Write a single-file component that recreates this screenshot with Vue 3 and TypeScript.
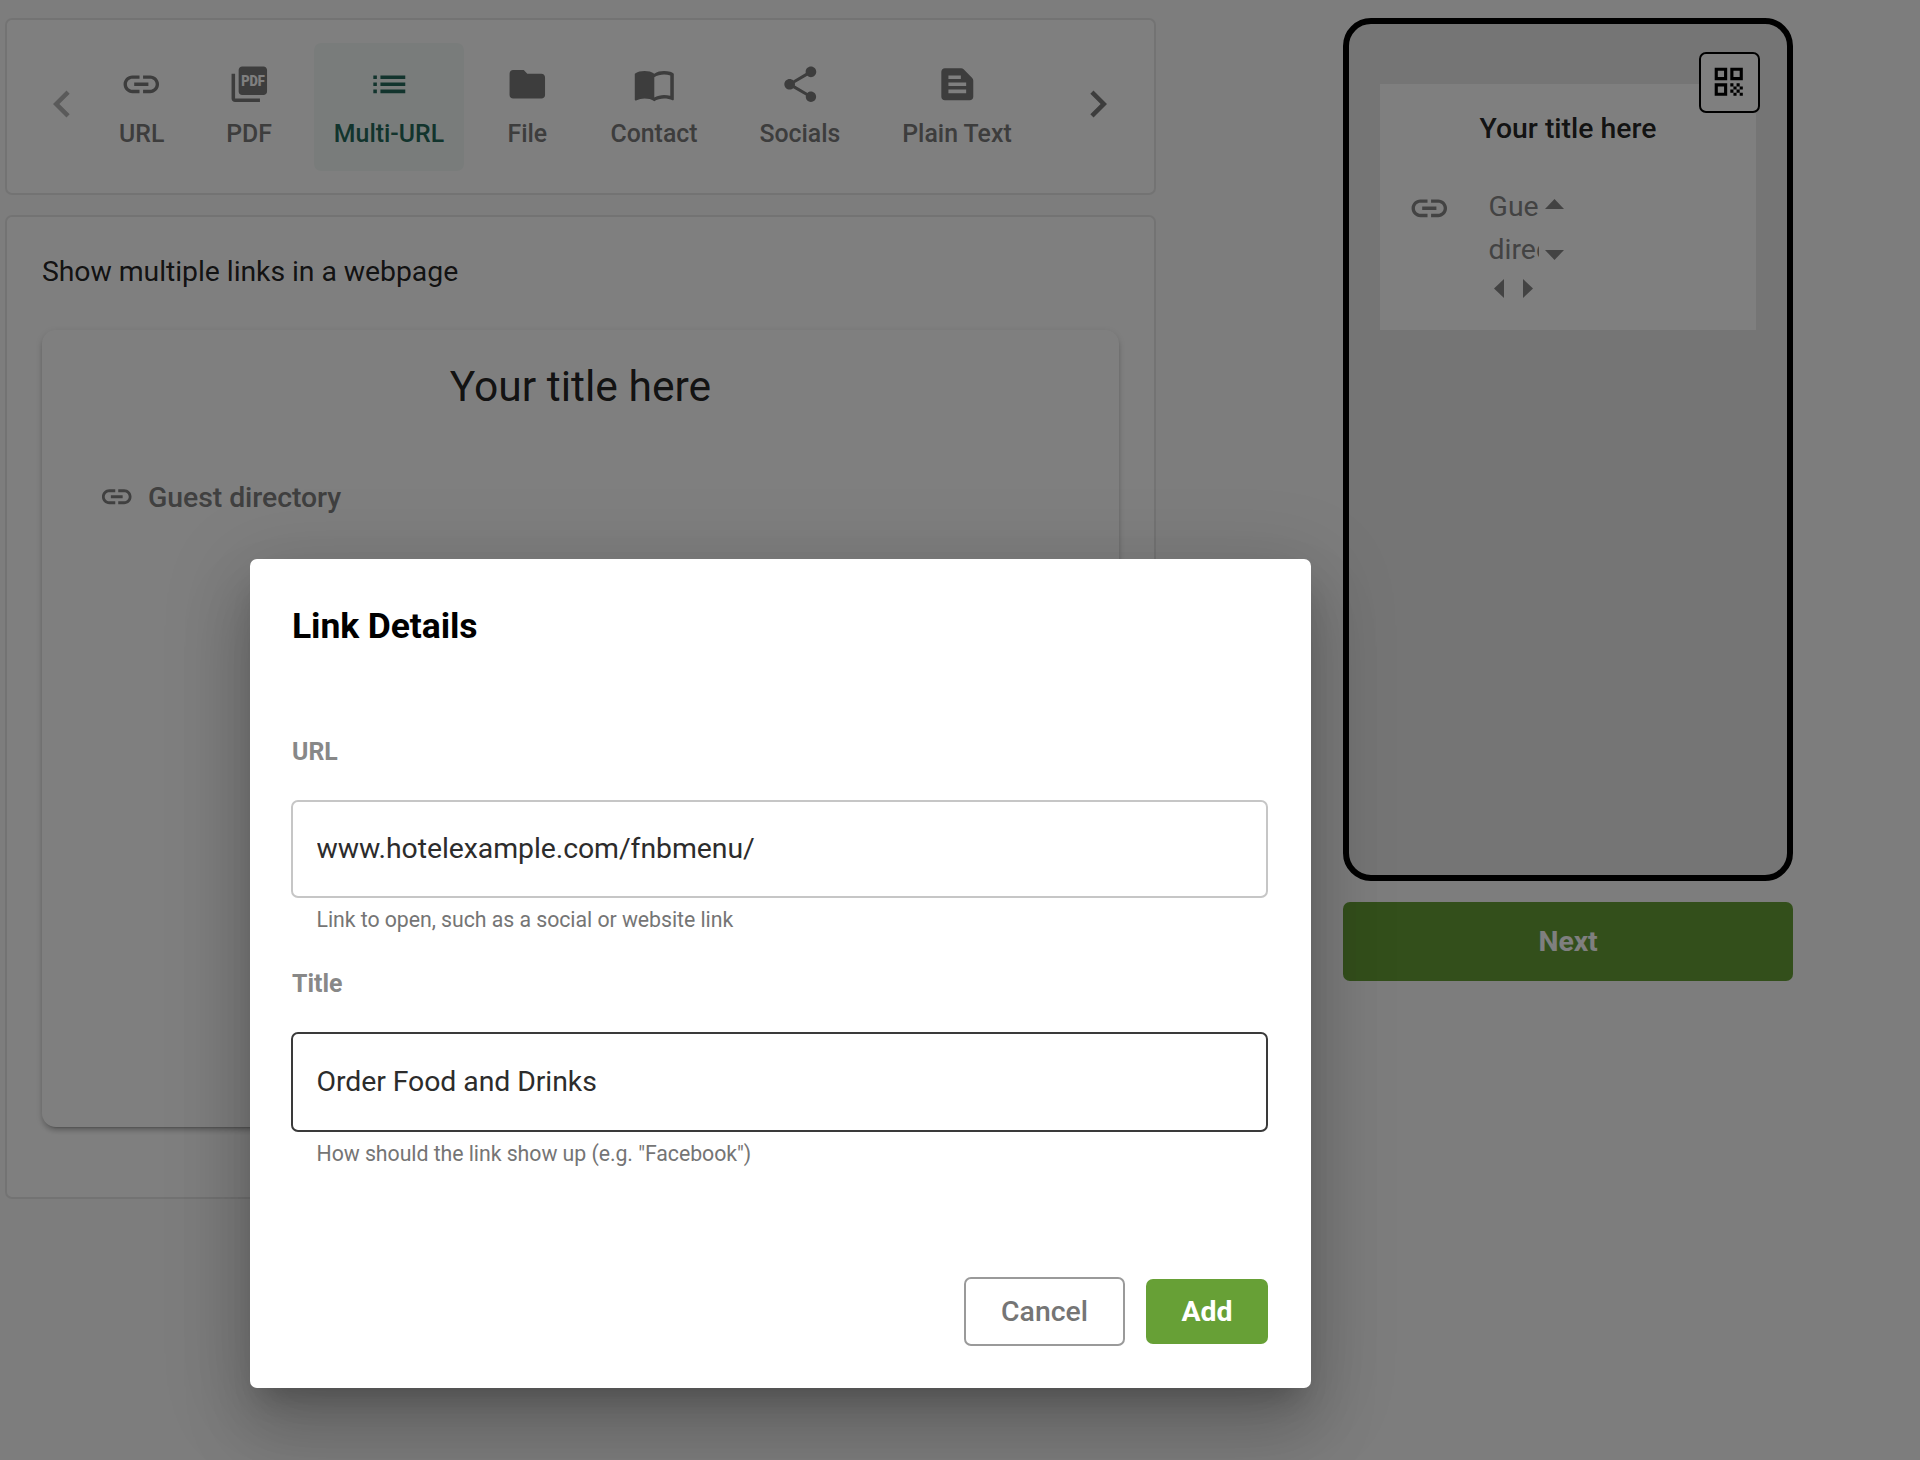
<script setup lang="ts">
import { ref } from 'vue'

interface Tab {
  label: string
  icon: string
  path: string
}

const linkPath =
  'M3.9 12c0-1.71 1.39-3.1 3.1-3.1h4V7H7c-2.76 0-5 2.24-5 5s2.24 5 5 5h4v-1.9H7c-1.71 0-3.1-1.39-3.1-3.1zM8 13h8v-2H8v2zm9-6h-4v1.9h4c1.71 0 3.1 1.39 3.1 3.1s-1.39 3.1-3.1 3.1h-4V17h4c2.76 0 5-2.24 5-5s-2.24-5-5-5z'

const tabs: Tab[] = [
  { label: 'URL', icon: 'link', path: linkPath },
  {
    label: 'PDF',
    icon: 'pdf',
    path: 'M20 2H8c-1.1 0-2 .9-2 2v12c0 1.1.9 2 2 2h12c1.1 0 2-.9 2-2V4c0-1.1-.9-2-2-2zM4 6H2v14c0 1.1.9 2 2 2h14v-2H4V6z',
  },
  {
    label: 'Multi-URL',
    icon: 'list',
    path: 'M3 13h2v-2H3v2zm0 4h2v-2H3v2zm0-8h2V7H3v2zm4 4h14v-2H7v2zm0 4h14v-2H7v2zM7 7v2h14V7H7z',
  },
  {
    label: 'File',
    icon: 'folder',
    path: 'M10 4H4c-1.1 0-1.99.9-1.99 2L2 18c0 1.1.9 2 2 2h16c1.1 0 2-.9 2-2V8c0-1.1-.9-2-2-2h-8l-2-2z',
  },
  {
    label: 'Contact',
    icon: 'book',
    path: 'M21 5c-1.11-.35-2.33-.5-3.5-.5-1.95 0-4.05.4-5.5 1.5-1.45-1.1-3.55-1.5-5.5-1.5S2.45 4.9 1 6v14.65c0 .25.25.5.5.5.1 0 .15-.05.25-.05C3.1 20.45 5.05 20 6.5 20c1.95 0 4.05.4 5.5 1.5 1.35-.85 3.8-1.5 5.5-1.5 1.65 0 3.35.3 4.75 1.05.1.05.15.05.25.05.25 0 .5-.25.5-.5V6c-.6-.45-1.25-.75-2-1zm0 13.5c-1.1-.35-2.3-.5-3.5-.5-1.7 0-4.15.65-5.5 1.5V8c1.35-.85 3.8-1.5 5.5-1.5 1.2 0 2.4.15 3.5.5v11.5z',
  },
  {
    label: 'Socials',
    icon: 'share',
    path: 'M18 16.08c-.76 0-1.44.3-1.96.77L8.91 12.7c.05-.23.09-.46.09-.7s-.04-.47-.09-.7l7.05-4.11c.54.5 1.25.81 2.04.81 1.66 0 3-1.34 3-3s-1.34-3-3-3-3 1.34-3 3c0 .24.04.47.09.7L8.04 9.81C7.5 9.31 6.79 9 6 9c-1.66 0-3 1.34-3 3s1.34 3 3 3c.79 0 1.5-.31 2.04-.81l7.12 4.16c-.05.21-.08.43-.08.65 0 1.61 1.31 2.92 2.92 2.92 1.61 0 2.92-1.31 2.92-2.92s-1.31-2.92-2.92-2.92z',
  },
  {
    label: 'Plain Text',
    icon: 'text',
    path: 'M20.41 8.41l-4.83-4.83c-.37-.37-.88-.58-1.41-.58H5c-1.1 0-2 .9-2 2v14c0 1.1.9 2 2 2h14c1.1 0 2-.9 2-2V9.83c0-.53-.21-1.04-.59-1.42zM7 7h7v2H7V7zm10 10H7v-2h10v2zm0-4H7v-2h10v2z',
  },
]

const active = ref('Multi-URL')
const pageTitle = 'Your title here'
const url = ref('www.hotelexample.com/fnbmenu/')
const title = ref('Order Food and Drinks')
</script>

<template>
  <div class="page">
    <main class="editor">
      <nav class="panel tabs">
        <svg class="chevron muted" viewBox="0 0 24 24"><path d="M15.41 7.41 14 6l-6 6 6 6 1.41-1.41L10.83 12z" /></svg>
        <div class="tab-list">
          <div v-for="t in tabs" :key="t.label" class="tab" :class="{ active: t.label === active }">
            <svg class="tab-icon" viewBox="0 0 24 24">
              <path :d="t.path" />
              <text v-if="t.icon === 'pdf'" class="pdf-text" x="14.1" y="13" textLength="13.4" lengthAdjust="spacingAndGlyphs">PDF</text>
            </svg>
            <span class="tab-label">{{ t.label }}</span>
          </div>
        </div>
        <svg class="chevron next-tabs" viewBox="0 0 24 24"><path d="M10 6 8.59 7.41 13.17 12l-4.58 4.59L10 18l6-6z" /></svg>
      </nav>

      <section class="panel content">
        <p class="lead">Show multiple links in a webpage</p>
        <div class="paper">
          <h2 class="paper-title">{{ pageTitle }}</h2>
          <div class="link-row">
            <svg class="row-icon" viewBox="0 0 24 24"><path :d="linkPath" /></svg>
            <span>Guest directory</span>
          </div>
        </div>
      </section>
    </main>

    <aside class="side">
      <div class="phone">
        <div class="screen">
          <h3 class="screen-title">{{ pageTitle }}</h3>
          <div class="screen-row">
            <svg class="screen-icon" viewBox="0 0 24 24"><path :d="linkPath" /></svg>
            <div class="scroller">
              <div class="scroller-top">
                <div class="clip">Guest directory</div>
                <div class="v-arrows">
                  <svg viewBox="0 0 19 10" width="19" height="10"><path d="M0 10 9.5 0 19 10z" /></svg>
                  <svg viewBox="0 0 19 10" width="19" height="10"><path d="M0 0 9.5 10 19 0z" /></svg>
                </div>
              </div>
              <div class="h-arrows">
                <svg viewBox="0 0 10 19" width="10" height="19"><path d="M10 0 0 9.5 10 19z" /></svg>
                <svg viewBox="0 0 10 19" width="10" height="19"><path d="M0 0 10 9.5 0 19z" /></svg>
              </div>
            </div>
          </div>
        </div>
        <button class="qr">
          <svg viewBox="0 0 24 24">
            <path d="M3 11h8V3H3v8zm2-6h4v4H5V5zM3 21h8v-8H3v8zm2-6h4v4H5v-4zM13 3v8h8V3h-8zm6 6h-4V5h4v4zM19 19h2v2h-2zM13 13h2v2h-2zM15 15h2v2h-2zM13 17h2v2h-2zM15 19h2v2h-2zM17 17h2v2h-2zM17 13h2v2h-2zM19 15h2v2h-2z" />
          </svg>
        </button>
      </div>
      <button class="next">Next</button>
    </aside>

    <div class="backdrop">
      <form class="dialog" @submit.prevent>
        <h1 class="dialog-title">Link Details</h1>
        <div class="field">
          <label for="link-url">URL</label>
          <input id="link-url" v-model="url" class="input-url" type="text" spellcheck="false" />
          <p class="help">Link to open, such as a social or website link</p>
        </div>
        <div class="field">
          <label for="link-title">Title</label>
          <input id="link-title" v-model="title" class="current" type="text" spellcheck="false" />
          <p class="help">How should the link show up (e.g. "Facebook")</p>
        </div>
        <div class="actions">
          <button type="button" class="cancel">Cancel</button>
          <button type="submit" class="add">Add</button>
        </div>
      </form>
    </div>
  </div>
</template>

<style>
body {
  margin: 0;
  overflow: hidden;
}
</style>

<style scoped>
* {
  box-sizing: border-box;
}
.page {
  position: relative;
  display: flex;
  align-items: flex-start;
  gap: 187px;
  width: 1920px;
  height: 1460px;
  padding: 18px 0 0 5px;
  background: #fafafa;
  font-family: Roboto, sans-serif;
  font-size: 28.4px;
  color: rgba(0, 0, 0, 0.87);
  overflow: hidden;
}
h1, h2, h3, p {
  margin: 0;
}
button {
  font-family: inherit;
  padding: 0;
}
svg {
  display: block;
  fill: currentColor;
  flex: none;
}
.editor {
  width: 1151px;
  display: flex;
  flex-direction: column;
  gap: 20px;
}
.panel {
  background: #fff;
  border: 2px solid #e6e6e6;
  border-radius: 7px;
}
.tabs {
  height: 177px;
  display: flex;
  align-items: flex-start;
  padding: 23px 29px 0 28px;
  color: #7a7a7a;
}
.chevron {
  width: 54px;
  height: 54px;
  margin-top: 34px;
}
.chevron.muted {
  color: #b4b4b4;
}
.chevron.next-tabs {
  margin-left: auto;
}
.tab-list {
  display: flex;
  gap: 21.9px;
  margin-left: 10px;
}
.tab {
  display: flex;
  flex-direction: column;
  align-items: center;
  height: 128px;
  padding: 20.2px 20px 0;
  border-radius: 7px;
}
.tab.active {
  background: #f3f9f7;
  color: #24695a;
}
.tab-icon {
  width: 42.6px;
  height: 42.6px;
  overflow: visible;
}
.pdf-text {
  font-weight: 900;
  font-size: 8.4px;
  text-anchor: middle;
  fill: #fff;
}
.tab-label {
  margin-top: 12.5px;
  font-size: 24.85px;
  line-height: 31px;
  font-weight: 500;
}
.content {
  height: 984px;
  padding: 35px 35px 0;
}
.lead {
  line-height: 40px;
  letter-spacing: -0.06px;
}
.paper {
  margin-top: 38px;
  height: 797px;
  border-radius: 14px;
  background: #fff;
  box-shadow: 0 5px 2px -4px rgba(0, 0, 0, 0.2), 0 4px 4px 0 rgba(0, 0, 0, 0.14), 0 2px 9px 0 rgba(0, 0, 0, 0.12);
}
.paper-title {
  padding-top: 26px;
  line-height: 60px;
  font-size: 42.6px;
  font-weight: 400;
  text-align: center;
}
.link-row {
  display: flex;
  align-items: center;
  gap: 14px;
  margin: 61px 0 0 56.5px;
  height: 40px;
  font-weight: 500;
  letter-spacing: -0.05px;
  color: #808080;
}
.row-icon {
  width: 35.5px;
  height: 35.5px;
}
.side {
  width: 450px;
  display: flex;
  flex-direction: column;
  gap: 21px;
}
.phone {
  position: relative;
  height: 863px;
  padding: 60px 31px;
  border: 6px solid #000;
  border-radius: 28px;
  background: #ebebeb;
}
.screen {
  height: 246px;
  padding-top: 25px;
  background: #fff;
}
.screen-title {
  line-height: 40px;
  font-size: 28.4px;
  font-weight: 500;
  text-align: center;
}
.screen-row {
  display: flex;
  align-items: flex-start;
  margin-top: 37px;
  padding-left: 28px;
  color: #868686;
}
.screen-icon {
  width: 42.6px;
  height: 42.6px;
  margin-top: 1px;
}
.scroller {
  margin-left: 38px;
}
.scroller-top {
  display: flex;
}
.clip {
  width: 50px;
  height: 86px;
  overflow: hidden;
  line-height: 42.8px;
}
.v-arrows {
  display: flex;
  flex-direction: column;
  justify-content: space-between;
  margin-left: 6px;
  padding: 13px 0 12px;
}
.h-arrows {
  display: flex;
  gap: 19px;
  margin: 7px 0 0 5px;
}
.qr {
  position: absolute;
  top: 27.5px;
  right: 27.5px;
  width: 61px;
  height: 61px;
  display: flex;
  align-items: center;
  justify-content: center;
  border: 2px solid #000;
  border-radius: 7px;
  background: #fff;
  color: #000;
}
.qr svg {
  width: 37.5px;
  height: 37.5px;
}
.next {
  height: 79px;
  border: 0;
  border-radius: 7px;
  background: #669f36;
  color: #fff;
  font-size: 28.4px;
  font-weight: 700;
  letter-spacing: -0.1px;
}
.backdrop {
  position: absolute;
  inset: 0;
  padding: 558.5px 0 0 250px;
  background: rgba(0, 0, 0, 0.5);
}
.dialog {
  width: 1061px;
  height: 829px;
  padding: 42.5px 43px 0 42px;
  border-radius: 7px;
  background: #fff;
  box-shadow: 0 20px 27px -12px rgba(0, 0, 0, 0.2), 0 43px 67px 5px rgba(0, 0, 0, 0.14), 0 16px 82px 14px rgba(0, 0, 0, 0.12);
}
.dialog-title {
  margin-bottom: 85px;
  line-height: 50px;
  font-size: 35.5px;
  font-weight: 700;
  letter-spacing: -0.1px;
  color: #000;
}
.field {
  display: flex;
  flex-direction: column;
}
.field label {
  line-height: 32px;
  font-size: 24.85px;
  font-weight: 700;
  color: #888;
}
.field input {
  width: 977px;
  height: 100px;
  margin: 32px 0 0 -1px;
  padding: 0 24px 1px 23.5px;
  border: 2px solid #c6c6c6;
  border-radius: 7px;
  outline: 0;
  background: #fff;
  font-family: inherit;
  font-size: 28.4px;
  letter-spacing: -0.06px;
  color: #2c2c2c;
}
.field .input-url {
  height: 98px;
  padding-bottom: 2px;
}
.field .current {
  border-color: #3a3a3a;
}
.help {
  margin: 7px 0 0 24.5px;
  line-height: 30px;
  font-size: 21.3px;
  letter-spacing: -0.05px;
  color: #757575;
}
.field + .field {
  margin-top: 33px;
}
.actions {
  display: flex;
  justify-content: flex-end;
  align-items: center;
  gap: 21px;
  margin-top: 108px;
}
.actions button {
  font-size: 28.4px;
  font-weight: 500;
  border-radius: 7px;
}
.cancel {
  width: 161px;
  height: 69px;
  border: 2px solid #9a9a9a;
  background: #fff;
  color: #757575;
}
.actions .add {
  width: 122px;
  height: 65px;
  border: 0;
  background: #67a036;
  color: #fff;
  font-weight: 700;
}
</style>
